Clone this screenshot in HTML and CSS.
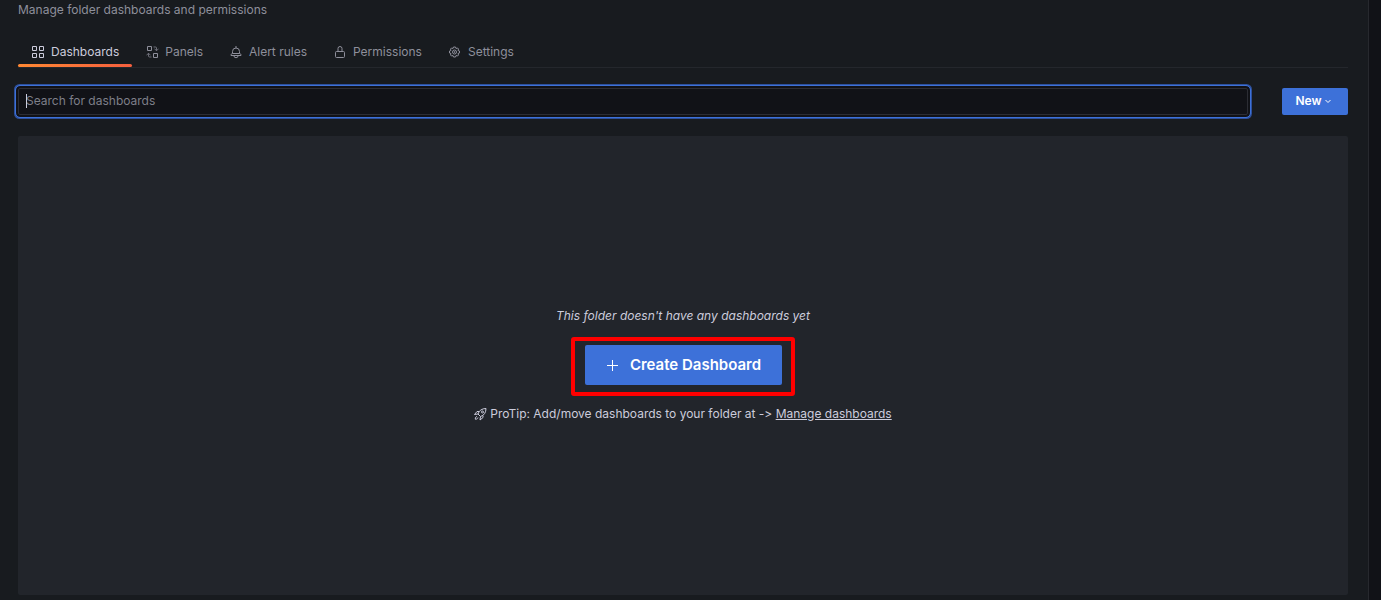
FILE: index.html
```html
<!DOCTYPE html>
<html lang="en">
<head>
<meta charset="utf-8">
<title>Manage folder dashboards</title>
<link rel="stylesheet" href="styles.css">
</head>
<body>
<main class="page">
  <p class="subtitle">Manage folder dashboards and permissions</p>
  <nav class="tabs">
    <a class="tab tab-active" href="#dashboards">
      <svg class="icon" viewBox="0 0 13 13"><path d="M.5 1.500h4v4h-4zM7.500 1.500h4v4h-4zM.5 8.500h4v4h-4zM7.500 8.500h4v4h-4z"/></svg>Dashboards</a>
    <a class="tab" href="#panels">
      <svg class="icon" viewBox="0 0 13 13"><path d="M1.500 1.500h4v4h-4zM7.500 8.500h4v4h-4z"/><path class="faint" d="M7.500 2h2a1 1 0 0 1 1 1v2.500M8.500 4l2 1.500 2-1.500M5.500 12h-2a1 1 0 0 1-1-1V8.500M.5 10l2-1.500 2 1.500"/></svg>Panels</a>
    <a class="tab" href="#alerts">
      <svg class="icon" viewBox="0 0 13 13"><path d="M6 1v2M2.500 8.500V6.500a3.500 3.500 0 0 1 7 0v2M2.500 8.500c-1 0-1.500.7-1.500 2h10c0-1.300-.5-2-1.500-2zM4 11a2 1.700 0 0 0 4 0"/></svg>Alert rules</a>
    <a class="tab" href="#permissions">
      <svg class="icon" viewBox="0 0 13 13"><path d="M4 6V3.500a2 2 0 0 1 4 0V6M2.500 6.500h7a1 1 0 0 1 1 1v4a1 1 0 0 1-1 1h-7a1 1 0 0 1-1-1v-4a1 1 0 0 1 1-1z"/></svg>Permissions</a>
    <a class="tab" href="#settings">
      <svg class="icon icon-gear" viewBox="0 0 26 26"><path d="M9 4h4l1 3 3-1 2 2-1 3 3 1v4l-3 1 1 3-2 2-3-1-1 3H9l-1-3-3 1-2-2 1-3-3-1v-4l3-1-1-3 2-2 3 1z"/><circle cx="11" cy="14" r="4"/><circle cx="11" cy="14" r="1"/></svg>Settings</a>
  </nav>
  <div class="toolbar">
    <label class="search">
      <input class="search-input" type="text" placeholder="Search for dashboards" aria-label="Search for dashboards">
      <span class="caret"></span>
    </label>
    <button class="button button-new" type="button">New
      <svg class="chevron" viewBox="0 0 8 8"><path d="M1.500 3L4 5.500 6.500 3"/></svg></button>
  </div>
  <section class="empty">
    <p class="empty-title">This folder doesn't have any dashboards yet</p>
    <div class="highlight">
      <button class="button button-create" type="button">
        <svg class="plus" viewBox="0 0 12 12"><path d="M5.500 1v11M0 6.500h11"/></svg>Create Dashboard</button>
    </div>
    <p class="tip">
      <svg class="icon" viewBox="0 0 13 13"><path d="M4 7C5 3.500 8 1.500 12 1.500c0 4-2 7-5.500 8zM5 4.500H3L.5 7.500 4 7M9 8.500v2L6 13l.5-3.500M3 9.500c-1.300.2-1.700 1-1.700 2.700 1.700 0 2.500-.4 2.700-1.700"/><circle cx="8.500" cy="5" r="1"/></svg>
      <span>ProTip: Add/move dashboards to your folder at -&gt; <a class="link" href="#manage">Manage dashboards</a></span>
    </p>
  </section>
</main>
</body>
</html>
```
FILE: styles.css
```css
* {
  box-sizing: border-box;
}

body {
  margin: 0;
  min-height: 100vh;
  display: flex;
  background: #111217;
  color: #ccccdc;
  font-family: Inter, "Liberation Sans", sans-serif;
  font-size: 12px;
  font-variant-ligatures: no-contextual;
  line-height: 20px;
}

p {
  margin: 0;
}

.page {
  flex: 1;
  display: flex;
  flex-direction: column;
  min-height: 100vh;
  margin-right: 12px;
  padding: 0 20px 5px 18px;
  border-right: 1px solid #27292e;
  background: #181b1f;
}

.subtitle {
  color: #8e8f9b;
}

.tabs {
  display: flex;
  margin-top: 16px;
  border-bottom: 1px solid #24272c;
}

.tab {
  position: relative;
  display: flex;
  align-items: center;
  gap: 6px;
  height: 31px;
  padding: 0 13px 0 14px;
  color: #8e8f9b;
  text-decoration: none;
}

.tab-active {
  color: #ccccdc;
}

.tab-active::after {
  content: "";
  position: absolute;
  right: 0;
  bottom: 0;
  left: 0;
  height: 3px;
  border-radius: 2px;
  background: linear-gradient(90deg, #ff8833, #f55f3e);
}

.icon {
  width: 13px;
  height: 13px;
  flex: none;
  overflow: visible;
  fill: none;
  stroke: currentColor;
  stroke-width: 1;
  stroke-linejoin: round;
}

.icon-gear {
  stroke-width: 2;
}

.faint {
  opacity: 0.7;
}

.toolbar {
  display: flex;
  gap: 34px;
  margin: 20px 0 21px;
}

.search {
  position: relative;
  flex: 1;
  display: flex;
}

.search-input {
  width: 100%;
  height: 27px;
  padding: 0 7px 2px;
  border: 1px solid #2c2d34;
  border-radius: 2px;
  outline: 1px solid #3d71d9;
  outline-offset: 2px;
  box-shadow: 0 0 0 2px #111217, 0 0 0 4px #2e509a;
  background: #111217;
  color: #ccccdc;
  font: inherit;
}

.search-input::placeholder {
  color: #7e7f89;
  opacity: 1;
}

.caret {
  position: absolute;
  top: 6px;
  left: 8px;
  width: 1px;
  height: 14px;
  background: #ccccdc;
}

.button {
  display: flex;
  align-items: center;
  border: 0;
  border-radius: 2px;
  background: #3d71d9;
  color: #ffffff;
  font: inherit;
  font-weight: 600;
}

.button-new {
  gap: 2px;
  justify-content: center;
  width: 66px;
  height: 27px;
  padding: 0 3px 2px 0;
}

.chevron {
  width: 8px;
  height: 8px;
  fill: none;
  stroke: currentColor;
}

.empty {
  flex: 1;
  display: flex;
  flex-direction: column;
  align-items: center;
  justify-content: center;
  padding-bottom: 2px;
  border-radius: 2px;
  background: #22252b;
}

.empty-title {
  font-style: italic;
}

.highlight {
  margin: 11px 0 8px;
  padding: 4px 9px 7px 10px;
  border: 4px solid #ff0000;
  border-radius: 3px;
}

.button-create {
  gap: 11px;
  height: 40px;
  padding: 0 21px 0 22px;
  font-size: 15px;
}

.plus {
  width: 12px;
  height: 12px;
  fill: none;
  stroke: currentColor;
}

.tip {
  display: flex;
  align-items: center;
  gap: 3px;
}

.link {
  color: inherit;
  text-decoration: underline;
}
```
